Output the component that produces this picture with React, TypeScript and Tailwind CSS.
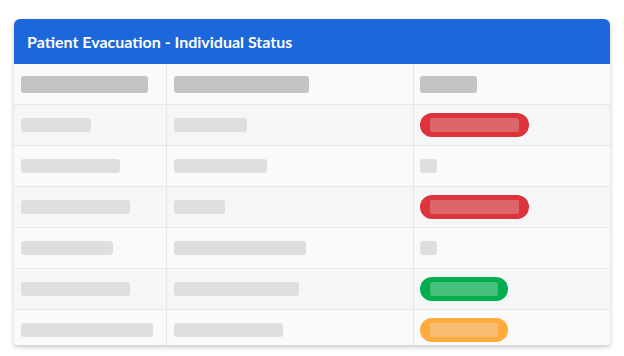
import React from 'react';

type Status = 'red' | 'green' | 'orange' | 'none';

interface Row {
    name: number;
    ward: number;
    status: Status;
    statusWidth: number;
}

const rows: Row[] = [
    { name: 70, ward: 73, status: 'red', statusWidth: 109 },
    { name: 99, ward: 93, status: 'none', statusWidth: 17 },
    { name: 109, ward: 51, status: 'red', statusWidth: 109 },
    { name: 92, ward: 132, status: 'none', statusWidth: 17 },
    { name: 109, ward: 125, status: 'green', statusWidth: 88 },
    { name: 132, ward: 109, status: 'orange', statusWidth: 88 },
];

const badgeStyles: Record<Exclude<Status, 'none'>, { outer: string; inner: string }> = {
    red: { outer: 'bg-[#dc343a]', inner: 'bg-[#dc6669]' },
    green: { outer: 'bg-[#00ae4d]', inner: 'bg-[#47c07b]' },
    orange: { outer: 'bg-[#ffab3d]', inner: 'bg-[#f5bc72]' },
};

const Bar: React.FC<{ width: number; dark?: boolean }> = ({ width, dark }) => (
    <div
        className={`rounded-[3px] ${dark ? 'h-[17px] bg-[#c4c4c4]' : 'h-[14px] bg-[#dedede]'}`}
        style={{ width }}
    />
);

const StatusBadge: React.FC<{ status: Status; width: number }> = ({ status, width }) => {
    if (status === 'none') return <Bar width={width} />;
    const s = badgeStyles[status];
    return (
        <div className={`h-6 rounded-full px-[10px] py-[5px] ${s.outer}`} style={{ width }}>
            <div className={`h-full rounded-[2px] ${s.inner}`} />
        </div>
    );
};

const Cell: React.FC<{ children: React.ReactNode; last?: boolean }> = ({ children, last }) => (
    <div className={`flex items-center ${last ? 'pl-[6px]' : 'pl-[7px] border-r border-[#e6e6e6]'}`}>{children}</div>
);

export default function App() {
    return (
        <div className="w-[624px] h-[356px] bg-white pt-[19px] pl-[14px] font-['Lato','Noto_Sans',sans-serif]">
            <div className="w-[596px] h-[326px] rounded-t-[6px] rounded-b-[3px] overflow-hidden bg-[#fafafa] shadow-[0_2px_5px_rgba(0,0,0,0.22)]">
                <div className="h-[45px] bg-[#1c67d9] flex items-center pl-[13px]">
                    <h1 className="text-white text-[16px] font-bold">
                        Patient Evacuation - Individual Status
                    </h1>
                </div>

                <div className="grid grid-cols-[153px_247px_1fr] h-[41px] bg-[#fafafa] border-b border-[#e6e6e6]">
                    <Cell><Bar width={127} dark /></Cell>
                    <Cell><Bar width={135} dark /></Cell>
                    <Cell last><Bar width={57} dark /></Cell>
                </div>

                {rows.map((row, i) => (
                    <div
                        key={i}
                        className={`grid grid-cols-[153px_247px_1fr] h-[41px] border-b border-[#e6e6e6] ${
                            i % 2 === 0 ? 'bg-[#f5f6f8]' : 'bg-[#fafafa]'
                        }`}
                    >
                        <Cell><Bar width={row.name} /></Cell>
                        <Cell><Bar width={row.ward} /></Cell>
                        <Cell last><StatusBadge status={row.status} width={row.statusWidth} /></Cell>
                    </div>
                ))}
            </div>
        </div>
    );
}
